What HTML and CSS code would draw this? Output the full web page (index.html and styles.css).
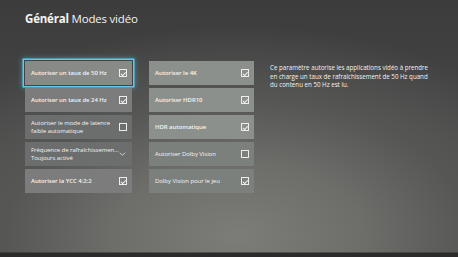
FILE: index.html
```html
<!DOCTYPE html>
<html lang="fr">
<head>
<meta charset="utf-8">
<link rel="stylesheet" href="styles.css">
</head>
<body>
<div class="screen">
  <h1 class="title"><b>Général</b> Modes vidéo</h1>
  <div class="main">
    <div class="col col-left">
      <div class="tile focused t-a"><span class="label bold">Autoriser un taux de 50 Hz</span><span class="box checked"></span></div>
      <div class="tile t-b"><span class="label semi">Autoriser un taux de 24 Hz</span><span class="box checked"></span></div>
      <div class="tile t-c"><span class="label">Autoriser le mode de latence<br>faible automatique</span><span class="box"></span></div>
      <div class="tile t-c"><span class="label">Fréquence de rafraîchissemen...<br>Toujours activé</span><svg class="chev" viewBox="0 0 10 6" width="7" height="4"><path d="M1 1 L5 5 L9 1" fill="none" stroke="#eee" stroke-width="1.1"/></svg></div>
      <div class="tile t-b"><span class="label bold">Autoriser la YCC 4:2:2</span><span class="box checked"></span></div>
    </div>
    <div class="col col-right">
      <div class="tile t-r1"><span class="label semi">Autoriser le 4K</span><span class="box checked"></span></div>
      <div class="tile t-r1"><span class="label semi">Autoriser HDR10</span><span class="box checked"></span></div>
      <div class="tile t-r1"><span class="label bold">HDR automatique</span><span class="box checked"></span></div>
      <div class="tile t-r2"><span class="label">Autoriser Dolby Vision</span><span class="box"></span></div>
      <div class="tile t-r2"><span class="label">Dolby Vision pour le jeu</span><span class="box checked"></span></div>
    </div>
    <p class="desc">Ce paramètre autorise les applications vidéo à prendre en charge un taux de rafraîchissement de 50 Hz quand du contenu en 50 Hz est lu.</p>
  </div>
</div>
</body>
</html>
```

FILE: styles.css
```css
html, body {
  margin: 0;
  padding: 0;
}
body {
  width: 458px;
  height: 257px;
  overflow: hidden;
  font-family: "Open Sans", "Noto Sans", sans-serif;
  color: #f2f2f2;
  background:
    linear-gradient(to bottom, rgba(0,0,0,0) 0, rgba(0,0,0,0) 252px, #2c2a2a 253px, #2c2a2a 257px),
    radial-gradient(ellipse 360px 210px at 52% 92%, #7c7d78 0%, #6d6d6a 35%, #565655 65%, rgba(70,70,70,0) 100%),
    linear-gradient(to bottom, #3c3c3c 0%, #444444 40%, #585857 100%);
}
.screen {
  padding: 11px 0 0 25px;
}
.title {
  margin: 0;
  font-size: 11.5px;
  line-height: 15px;
  font-weight: 500;
  letter-spacing: -0.2px;
  color: #f4f4f4;
}
.title b {
  font-weight: 700;
}
.main {
  display: flex;
  align-items: flex-start;
  margin-top: 35px;
}
.col {
  display: flex;
  flex-direction: column;
  gap: 3px;
}
.col-left {
  width: 107px;
}
.col-right {
  width: 105px;
  margin-left: 17px;
}
.tile {
  height: 24px;
  box-sizing: border-box;
  display: flex;
  align-items: center;
  justify-content: space-between;
  padding: 0 5px 0 6px;
  background: #7a7b7a;
}
.label {
  font-size: 6px;
  line-height: 8.5px;
  color: #f3f3f3;
  white-space: nowrap;
  letter-spacing: -0.05px;
}
.label.bold { font-weight: 600; }
.label.semi { font-weight: 600; }
.t-a { background: #888a88; }
.t-b { background: #7b7c7b; }
.t-c { background: #6c6e6d; }
.t-r1 { background: #8b908c; }
.t-r2 { background: #7c807d; }
.focused {
  box-shadow: 0 0 0 1px #3f4446, 0 0 0 2.5px #5ccaf2, 0 0 5px 3px rgba(90, 200, 240, 0.45);
}
.box {
  flex: none;
  width: 8px;
  height: 8px;
  box-sizing: border-box;
  border: 1px solid #ededed;
  position: relative;
}
.box.checked::after {
  content: "";
  position: absolute;
  left: 1.5px;
  top: 0.5px;
  width: 2px;
  height: 3.5px;
  border-right: 1px solid #f0f0f0;
  border-bottom: 1px solid #f0f0f0;
  transform: rotate(45deg);
}
.chev {
  flex: none;
  margin-right: 1px;
}
.desc {
  margin: 3px 0 0 16px;
  width: 163px;
  font-size: 6.2px;
  line-height: 8.5px;
  color: #f2f2f2;
  font-weight: 500;
}
```
